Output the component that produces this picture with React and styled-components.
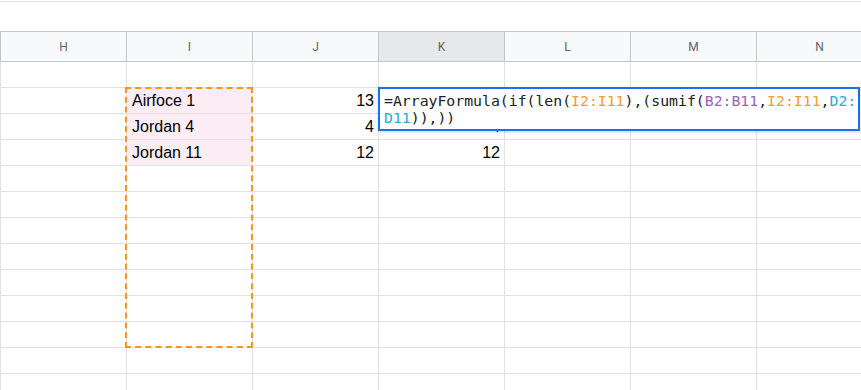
import React from "react";
import styled, { createGlobalStyle } from "styled-components";

const GlobalStyle = createGlobalStyle`
  html, body {
    margin: 0;
    padding: 0;
    background: #fff;
    overflow: hidden;
  }
  body {
    font-family: "Liberation Sans", Arial, sans-serif;
  }
`;

const Page = styled.div`
  width: 861px;
  height: 390px;
  overflow: hidden;
  background: #fff;
`;

const TopStrip = styled.div`
  height: 31px;
  box-sizing: border-box;
  border-top: 1px solid #fff;
  &::before {
    content: "";
    display: block;
    height: 1px;
    background: #e3e3e3;
  }
`;

const Sheet = styled.div`
  position: relative;
  width: 882px;
`;

const HeaderRow = styled.div`
  display: flex;
  height: 29px;
  border-top: 1px solid #c4c7c5;
  border-bottom: 1px solid #c4c7c5;
  background: #f8f9fa;
`;

const HeaderCell = styled.div`
  width: 126px;
  box-sizing: border-box;
  border-left: 1px solid #c4c7c5;
  display: flex;
  align-items: center;
  justify-content: center;
  font-family: Roboto, "Liberation Sans", sans-serif;
  font-size: 12px;
  color: #5f6368;
  background: ${(p) => (p.$active ? "#e6e8eb" : "transparent")};
`;

const Row = styled.div`
  display: flex;
  height: 26px;
  box-sizing: border-box;
  border-bottom: 1px solid #e2e2e2;
`;

const Cell = styled.div`
  width: 126px;
  box-sizing: border-box;
  border-left: 1px solid #e2e2e2;
  display: flex;
  align-items: center;
  justify-content: ${(p) => (p.$num ? "flex-end" : "flex-start")};
  padding: 0 4px 0 5px;
  font-size: 16px;
  color: #000;
  background: ${(p) => (p.$pink ? "#fbedf3" : "#fff")};
  white-space: nowrap;
  overflow: hidden;
`;

const Marquee = styled.div`
  position: absolute;
  left: 125px;
  top: 56px;
  width: 128px;
  height: 261px;
  box-sizing: border-box;
  border: 2px dashed #f7961f;
  pointer-events: none;
`;

const Editor = styled.div`
  position: absolute;
  left: 378px;
  top: 56px;
  width: 482px;
  height: 44px;
  box-sizing: border-box;
  border: 2px solid #1a73e8;
  background: #fff;
  box-shadow: 0 1px 3px rgba(60, 64, 67, 0.25);
  padding: 3px 0 0 4px;
  font-family: "DejaVu Sans Mono", "Liberation Mono", monospace;
  font-size: 14.8px;
  line-height: 17px;
  color: #202124;
  white-space: pre;
`;

const Ref = styled.span`
  color: ${(p) => p.$c};
`;

const ORANGE = "#f29b34";
const PURPLE = "#9b65b5";
const BLUE = "#2fa9d6";

const columns = ["H", "I", "J", "K", "L", "M", "N"];

// K2 sits under the formula editor, so it is left out here
const data = {
  1: { I: "Airfoce 1", J: "13" },
  2: { I: "Jordan 4", J: "4", K: "4" },
  3: { I: "Jordan 11", J: "12", K: "12" },
};

export default function App() {
  const rows = Array.from({ length: 13 }, (_, i) => i);
  return (
    <Page>
      <GlobalStyle />
      <TopStrip />
      <Sheet>
        <HeaderRow>
          {columns.map((c) => (
            <HeaderCell key={c} $active={c === "K"}>
              {c}
            </HeaderCell>
          ))}
        </HeaderRow>
        {rows.map((r) => (
          <Row key={r}>
            {columns.map((c) => {
              const v = data[r] && data[r][c];
              return (
                <Cell
                  key={c}
                  $num={c === "J" || c === "K"}
                  $pink={c === "I" && r >= 1 && r <= 3}
                >
                  {v || ""}
                </Cell>
              );
            })}
          </Row>
        ))}
        <Marquee />
        <Editor>
          =ArrayFormula(if(len(<Ref $c={ORANGE}>I2:I11</Ref>),(sumif(
          <Ref $c={PURPLE}>B2:B11</Ref>,<Ref $c={ORANGE}>I2:I11</Ref>,
          <Ref $c={BLUE}>D2:</Ref>
          {"\n"}
          <Ref $c={BLUE}>D11</Ref>)),))
        </Editor>
      </Sheet>
    </Page>
  );
}
